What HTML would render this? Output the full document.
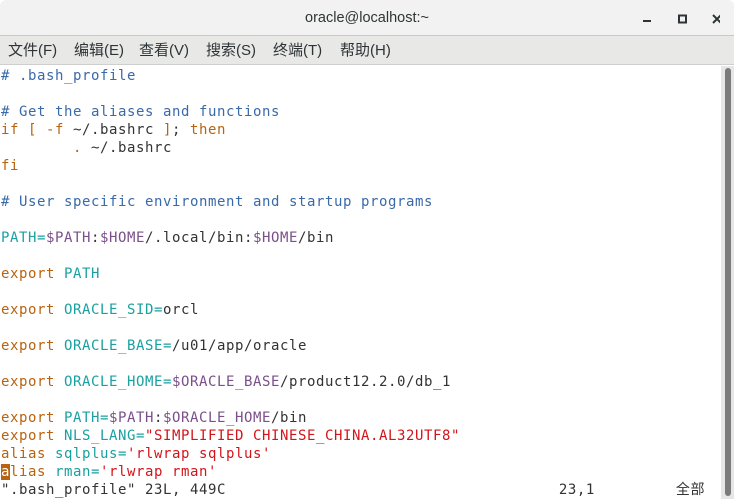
<!DOCTYPE html>
<html><head><meta charset="utf-8"><style>
*{margin:0;padding:0;box-sizing:border-box}
body{width:734px;height:499px;overflow:hidden;background:#fff;font-family:"Liberation Sans","Noto Sans CJK SC",sans-serif}
#title{position:absolute;left:0;top:0;width:734px;height:36px;background:#f2f2f2;border-bottom:1px solid #c8c8c8;border-radius:6px 6px 0 0;text-align:center;line-height:36px;font-size:14.5px;color:#2e3436}
#menu{position:absolute;left:0;top:36px;width:734px;height:29px;background:#e8e8e7;border-bottom:1px solid #cfcfcf;font-size:15px;color:#2e3436;line-height:29px;white-space:pre}
#menu span{position:absolute;top:0}
#term{position:absolute;left:1px;top:67px;font-family:"DejaVu Sans Mono","Liberation Mono","Noto Sans CJK SC",monospace;font-size:14px;letter-spacing:0.57px;line-height:18px;white-space:pre;color:#333}
.c{color:#3a6aa8}.k{color:#b8630f}.v{color:#1aa0a0}.p{color:#7a4f8a}.s{color:#d3141a}
#sb{position:absolute;left:721px;top:66px;width:13px;height:433px;background:#e6e6e6}
#th{position:absolute;left:725px;top:68px;width:6px;height:428px;background:#7b7b7b;border-radius:3px}
.cur{background:#b8630f;color:#fff}
</style></head><body>
<div id="title">oracle@localhost:~
<svg style="position:absolute;left:640px;top:12px" width="80" height="14"><rect x="3" y="8" width="8" height="2" fill="#2e3436"/><rect x="39" y="3.5" width="7" height="7" fill="none" stroke="#2e3436" stroke-width="2"/><path d="M74 3 L82 11 M82 3 L74 11" stroke="#2e3436" stroke-width="2" transform="translate(-1,0)"/></svg></div>
<div id="menu"><span style="left:8px">文件(F)</span><span style="left:74px">编辑(E)</span><span style="left:139px">查看(V)</span><span style="left:206px">搜索(S)</span><span style="left:273px">终端(T)</span><span style="left:340px">帮助(H)</span></div>
<div id="term"><span class="c"># .bash_profile</span>

<span class="c"># Get the aliases and functions</span>
<span class="k">if [ -f</span> ~/.bashrc <span class="k">]</span>; <span class="k">then</span>
        <span class="k">.</span> ~/.bashrc
<span class="k">fi</span>

<span class="c"># User specific environment and startup programs</span>

<span class="v">PATH=</span><span class="p">$PATH</span>:<span class="p">$HOME</span>/.local/bin:<span class="p">$HOME</span>/bin

<span class="k">export</span> <span class="v">PATH</span>

<span class="k">export</span> <span class="v">ORACLE_SID=</span>orcl

<span class="k">export</span> <span class="v">ORACLE_BASE=</span>/u01/app/oracle

<span class="k">export</span> <span class="v">ORACLE_HOME=</span><span class="p">$ORACLE_BASE</span>/product12.2.0/db_1

<span class="k">export</span> <span class="v">PATH=</span><span class="p">$PATH</span>:<span class="p">$ORACLE_HOME</span>/bin
<span class="k">export</span> <span class="v">NLS_LANG=</span><span class="s">"SIMPLIFIED CHINESE_CHINA.AL32UTF8"</span>
<span class="k">alias</span> <span class="v">sqlplus=</span><span class="s">'rlwrap sqlplus'</span>
<span class="k"><span class="cur">a</span>lias</span> <span class="v">rman=</span><span class="s">'rlwrap rman'</span>
".bash_profile" 23L, 449C                                     23,1         全部</div>
<div id="sb"></div><div id="th"></div>
</body></html>
